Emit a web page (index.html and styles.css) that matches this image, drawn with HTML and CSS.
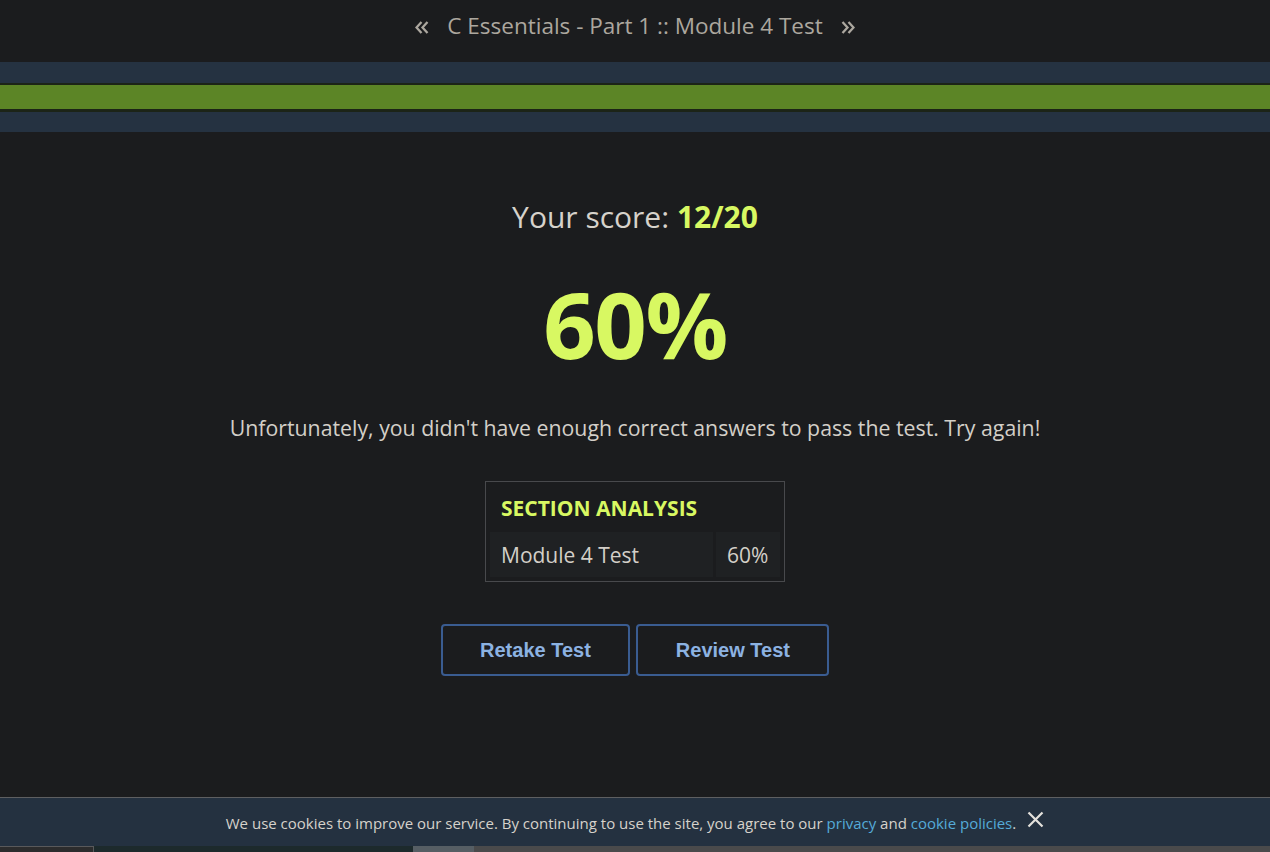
FILE: index.html
```html
<!DOCTYPE html>
<html lang="en">
<head>
<meta charset="utf-8">
<title>C Essentials - Part 1 :: Module 4 Test</title>
<link rel="stylesheet" href="styles.css">
</head>
<body>
<header class="topbar">
  <svg class="nav-arrow" width="14" height="13" viewBox="0 0 14 13"><path d="M6.5 1 L1.5 6.5 L6.5 12 M12.5 1 L7.5 6.5 L12.5 12" fill="none" stroke="currentColor" stroke-width="2.3"/></svg>
  <span class="title">C Essentials - Part 1 :: Module 4 Test</span>
  <svg class="nav-arrow" width="14" height="13" viewBox="0 0 14 13"><path d="M1.5 1 L6.5 6.5 L1.5 12 M7.5 1 L12.5 6.5 L7.5 12" fill="none" stroke="currentColor" stroke-width="2.3"/></svg>
</header>
<div class="progress">
  <div class="progress-track"><div class="progress-fill"></div></div>
</div>
<main class="result">
  <div class="score">Your score: <strong>12/20</strong></div>
  <div class="percent">60%</div>
  <p class="message">Unfortunately, you didn't have enough correct answers to pass the test. Try again!</p>
  <div class="analysis">
    <div class="analysis-head">SECTION ANALYSIS</div>
    <div class="analysis-row">
      <div class="cell cell-name">Module 4 Test</div>
      <div class="cell cell-val">60%</div>
    </div>
  </div>
  <div class="actions">
    <button class="btn">Retake Test</button>
    <button class="btn">Review Test</button>
  </div>
</main>
<div class="footer-fixed">
  <div class="cookie">
    <span>We use cookies to improve our service. By continuing to use the site, you agree to our <a href="#">privacy</a> and <a href="#">cookie policies</a>.</span>
    <svg class="close" width="17" height="17" viewBox="0 0 17 17"><path d="M1.5 1.5 L15.5 15.5 M15.5 1.5 L1.5 15.5" fill="none" stroke="currentColor" stroke-width="2.2"/></svg>
  </div>
  <div class="strip">
    <div class="seg seg-a"></div>
    <div class="seg seg-b"></div>
    <div class="seg seg-c"></div>
    <div class="seg seg-d"></div>
  </div>
</div>
</body>
</html>
```
FILE: styles.css
```css
html, body {
  margin: 0;
  padding: 0;
  background: #1b1c1e;
  font-family: "Open Sans", "Noto Sans", sans-serif;
  color: #d3cfc8;
  height: 100%;
  overflow: hidden;
}

.topbar {
  height: 62px;
  box-sizing: border-box;
  padding-top: 12px;
  display: flex;
  justify-content: center;
  align-items: flex-start;
  gap: 18px;
  color: #aca79f;
  font-size: 22.5px;
  line-height: 28px;
}
.nav-arrow {
  margin-top: 9px;
}

.progress {
  height: 70px;
  background: #253241;
  box-sizing: border-box;
  padding-top: 21px;
}
.progress-track {
  height: 29px;
  box-sizing: border-box;
  border-top: 2px solid #1c2417;
  border-bottom: 3px solid #1c2417;
  background: #5c8526;
}
.progress-fill {
  height: 100%;
}

.result {
  display: flex;
  flex-direction: column;
  align-items: center;
  padding-top: 66px;
}
.score {
  font-size: 30px;
  line-height: 38px;
  color: #d6d2cb;
}
.score strong {
  color: #d8f862;
  font-weight: 700;
}
.percent {
  margin-top: 38px;
  font-size: 92px;
  font-weight: 700;
  line-height: 100px;
  color: #d8f862;
  letter-spacing: -1.5px;
}
.message {
  margin: 39px 0 0;
  font-size: 21.3px;
  line-height: 30px;
  color: #d3cfc8;
}

.analysis {
  margin-top: 38px;
  width: 300px;
  box-sizing: border-box;
  border: 1px solid #48494c;
  padding: 4px;
}
.analysis-head {
  padding: 8px 11px 9px;
  font-size: 21px;
  line-height: 29px;
  font-weight: 700;
  color: #d8f862;
}
.analysis-row {
  display: flex;
  gap: 3px;
}
.cell {
  height: 45px;
  display: flex;
  align-items: center;
  background: #1f2123;
  font-size: 21px;
  color: #d3cfc8;
  box-sizing: border-box;
}
.cell-name {
  flex: 1;
  padding-left: 11px;
}
.cell-val {
  width: 64px;
  padding-left: 11px;
}

.actions {
  margin-top: 42px;
  display: flex;
  gap: 6px;
}
.btn {
  height: 52px;
  padding: 0 37.5px;
  background: transparent;
  border: 2px solid #3a5c91;
  border-radius: 4px;
  color: #8cb2e2;
  font-family: "Liberation Sans", Arial, sans-serif;
  font-weight: 700;
  font-size: 20px;
}

.footer-fixed {
  position: fixed;
  left: 0;
  right: 0;
  bottom: 0;
}
.cookie {
  height: 49px;
  box-sizing: border-box;
  border-top: 1px solid #5e5f61;
  background: #243140;
  display: flex;
  justify-content: center;
  align-items: center;
  gap: 11px;
  font-size: 15px;
  color: #d6d2cb;
  padding-top: 2px;
}
.cookie a {
  color: #55abd8;
  text-decoration: none;
}
.close {
  color: #e4e1dc;
  margin-top: -8px;
}
.strip {
  height: 6px;
  display: flex;
}
.seg-a {
  width: 93px;
  background: #2c2c2d;
  border-top: 1px solid #59595b;
  border-right: 1px solid #59595b;
}
.seg-b {
  width: 319px;
  background: #1d2a2c;
}
.seg-c {
  width: 61px;
  background: #565e64;
}
.seg-d {
  flex: 1;
  background: #4a4a4b;
}
```
